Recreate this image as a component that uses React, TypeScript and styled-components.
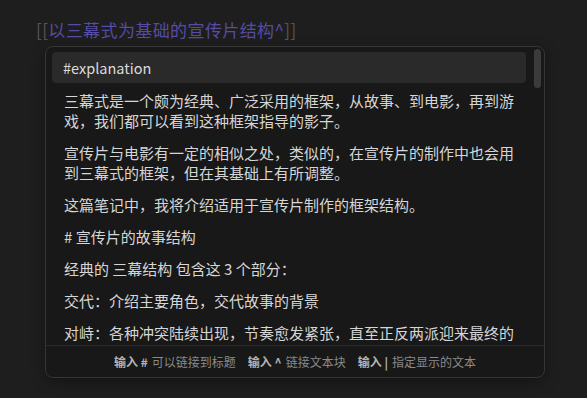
import React from 'react';
import styled, { createGlobalStyle } from 'styled-components';

const GlobalStyle = createGlobalStyle`
  html, body {
    margin: 0;
    padding: 0;
    background: #1e1e1e;
  }
  body {
    font-family: "Noto Sans CJK SC", "Noto Sans", sans-serif;
  }
`;

const Page = styled.div`
  width: 587px;
  height: 398px;
  box-sizing: border-box;
  padding: 18px 0 0 36px;
  background: #1e1e1e;
  overflow: hidden;
`;

const LinkTitle = styled.div`
  font-size: 17px;
  line-height: 24px;
  color: #564ca4;
  letter-spacing: 0.4px;
`;

const Bracket = styled.span`
  color: #555555;
`;

const Popup = styled.div`
  margin: 4px 0 0 9px;
  width: 500px;
  height: 332px;
  box-sizing: border-box;
  background: #181818;
  border: 1px solid #363636;
  border-radius: 8px;
  box-shadow: 0 4px 14px rgba(0, 0, 0, 0.35);
  display: flex;
  flex-direction: column;
  overflow: hidden;
`;

const ScrollArea = styled.div`
  flex: 1;
  min-height: 0;
  display: flex;
  padding: 5px 3px 0 6px;
  overflow: hidden;
`;

const Content = styled.div`
  flex: 1;
  overflow: hidden;
`;

const Scrollbar = styled.div`
  width: 7px;
  height: 39px;
  margin: -3px 0 0 8px;
  border-radius: 4px;
  background: #3b3b3b;
  flex-shrink: 0;
`;

const HeaderRow = styled.div`
  height: 31px;
  box-sizing: border-box;
  padding: 0 11px;
  display: flex;
  align-items: center;
  background: #2a2a2a;
  border-radius: 4px;
  color: #dcdcdc;
  font-size: 14.5px;
  margin-bottom: 8px;
`;

const Para = styled.p`
  margin: 0 0 12px;
  padding: 0 10px 0 12px;
  font-size: 15px;
  line-height: 20px;
  color: #d6d6d6;
`;

const Footer = styled.div`
  height: 31px;
  flex-shrink: 0;
  border-top: 1px solid #2a2a2a;
  display: flex;
  align-items: center;
  justify-content: center;
  gap: 12px;
  font-size: 12px;
  color: #8a8a8a;
`;

const Hint = styled.span`
  white-space: nowrap;
`;

const Key = styled.b`
  color: #b4b4b4;
  font-weight: 700;
  margin-right: 4px;
`;

const paragraphs = [
  '三幕式是一个颇为经典、广泛采用的框架，从故事、到电影，再到游戏，我们都可以看到这种框架指导的影子。',
  '宣传片与电影有一定的相似之处，类似的，在宣传片的制作中也会用到三幕式的框架，但在其基础上有所调整。',
  '这篇笔记中，我将介绍适用于宣传片制作的框架结构。',
  '# 宣传片的故事结构',
  '经典的 三幕结构 包含这 3 个部分：',
  '交代：介绍主要角色，交代故事的背景',
  '对峙：各种冲突陆续出现，节奏愈发紧张，直至正反两派迎来最终的对决。',
];

const hints = [
  { key: '输入 #', text: '可以链接到标题' },
  { key: '输入 ^', text: '链接文本块' },
  { key: '输入 |', text: '指定显示的文本' },
];

const App: React.FC = () => {
  return (
    <>
      <GlobalStyle />
      <Page>
        <LinkTitle>
          <Bracket>[[</Bracket>以三幕式为基础的宣传片结构^<Bracket>]]</Bracket>
        </LinkTitle>
        <Popup>
          <ScrollArea>
            <Content>
              <HeaderRow>#explanation</HeaderRow>
              {paragraphs.map((p, i) => (
                <Para key={i}>{p}</Para>
              ))}
            </Content>
            <Scrollbar />
          </ScrollArea>
          <Footer>
            {hints.map((h) => (
              <Hint key={h.key}>
                <Key>{h.key}</Key>
                {h.text}
              </Hint>
            ))}
          </Footer>
        </Popup>
      </Page>
    </>
  );
};

export default App;
